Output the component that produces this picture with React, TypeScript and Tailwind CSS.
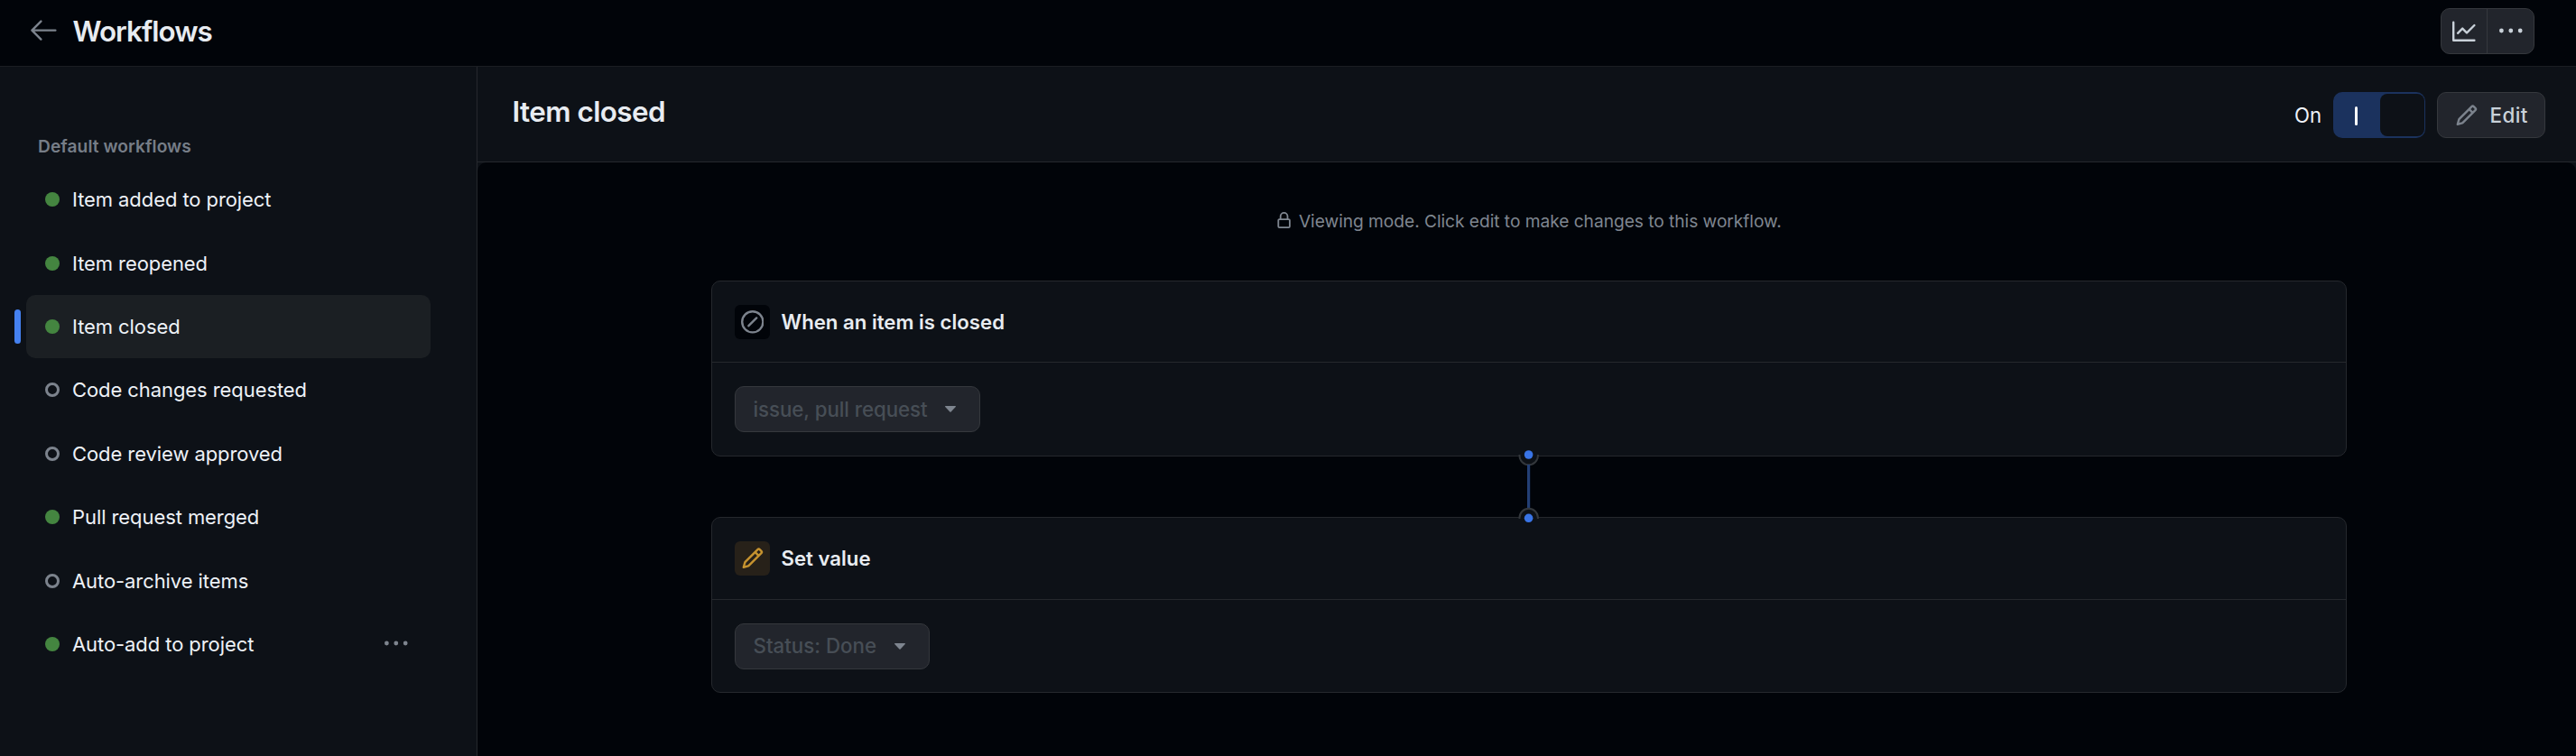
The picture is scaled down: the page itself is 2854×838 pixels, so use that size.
import type { ReactNode } from "react";

const PATHS = {
  arrowLeft:
    "M10.78 19.03a.75.75 0 0 1-1.06 0l-6.25-6.25a.75.75 0 0 1 0-1.06l6.25-6.25a.749.749 0 0 1 1.275.326.749.749 0 0 1-.215.734L5.81 11.5h14.44a.75.75 0 0 1 0 1.5H5.81l4.97 4.97a.75.75 0 0 1 0 1.06Z",
  graph:
    "M1.5 1.75V13.5h13.75a.75.75 0 0 1 0 1.5H.75a.75.75 0 0 1-.75-.75V1.75a.75.75 0 0 1 1.5 0Zm14.28 2.53-5.25 5.25a.75.75 0 0 1-1.06 0L7 7.06 4.28 9.78a.751.751 0 0 1-1.042-.018.751.751 0 0 1-.018-1.042l3.25-3.25a.75.75 0 0 1 1.06 0L10 7.94l4.72-4.72a.751.751 0 0 1 1.042.018.751.751 0 0 1 .018 1.042Z",
  kebab:
    "M8 9a1.5 1.5 0 1 0 0-3 1.5 1.5 0 0 0 0 3ZM1.5 9a1.5 1.5 0 1 0 0-3 1.5 1.5 0 0 0 0 3Zm13 0a1.5 1.5 0 1 0 0-3 1.5 1.5 0 0 0 0 3Z",
  pencil:
    "M11.013 1.427a1.75 1.75 0 0 1 2.474 0l1.086 1.086a1.75 1.75 0 0 1 0 2.474l-8.61 8.61c-.21.21-.47.364-.756.445l-3.251.93a.75.75 0 0 1-.927-.928l.929-3.25c.081-.286.235-.547.445-.758l8.61-8.61Zm.176 4.823L9.75 4.81l-6.286 6.287a.253.253 0 0 0-.064.108l-.558 1.953 1.953-.558a.253.253 0 0 0 .108-.064Zm1.238-3.763a.25.25 0 0 0-.354 0L10.811 3.75l1.439 1.44 1.263-1.263a.25.25 0 0 0 0-.354Z",
  lock: "M4 4a4 4 0 0 1 8 0v2h.25c.966 0 1.75.784 1.75 1.75v5.5A1.75 1.75 0 0 1 12.25 15h-8.5A1.75 1.75 0 0 1 2 13.25v-5.5C2 6.784 2.784 6 3.75 6H4Zm8.25 3.5h-8.5a.25.25 0 0 0-.25.25v5.5c0 .138.112.25.25.25h8.5a.25.25 0 0 0 .25-.25v-5.5a.25.25 0 0 0-.25-.25ZM10.5 6V4a2.5 2.5 0 1 0-5 0v2Z",
  skip: "M8 0a8 8 0 1 1 0 16A8 8 0 0 1 8 0ZM1.5 8a6.5 6.5 0 1 0 13 0 6.5 6.5 0 0 0-13 0Zm9.78-2.22-5.5 5.5a.749.749 0 0 1-1.275-.326.749.749 0 0 1 .215-.734l5.5-5.5a.751.751 0 0 1 1.042.018.751.751 0 0 1 .018 1.042Z",
};

function Icon({ name, box = 16, className }: { name: keyof typeof PATHS; box?: number; className: string }) {
  return (
    <svg viewBox={`0 0 ${box} ${box}`} fill="currentColor" className={`shrink-0 ${className}`} aria-hidden="true">
      <path d={PATHS[name]} />
    </svg>
  );
}

const WORKFLOWS = [
  { label: "Item added to project", on: true },
  { label: "Item reopened", on: true },
  { label: "Item closed", on: true, active: true },
  { label: "Code changes requested", on: false },
  { label: "Code review approved", on: false },
  { label: "Pull request merged", on: true },
  { label: "Auto-archive items", on: false },
  { label: "Auto-add to project", on: true, menu: true },
];

function Sidebar() {
  return (
    <nav className="w-[529px] shrink-0 border-r border-[#25282d] bg-[#0d1117] pt-[76px] pl-[29px]">
      <h2 className="pl-[13px] text-[19.2px] leading-[24px] font-semibold tracking-[0.06px] text-[#767d87]">
        Default workflows
      </h2>
      <ul className="mt-[12px] w-[448px]">
        {WORKFLOWS.map((w) => (
          <li
            key={w.label}
            className={`relative flex h-[70.4px] items-center rounded-[10px] pr-[25px] pl-[21px] ${w.active ? "bg-[#1b1f23]" : ""}`}
          >
            {w.active && <span className="absolute top-[16px] -left-[13px] h-[38px] w-[7px] rounded-[4px] bg-[#4581f0]" />}
            <span
              className={`size-[16px] shrink-0 rounded-full ${w.on ? "bg-[#448540]" : "border-3 border-[#7c838d]"}`}
            />
            <span className="ml-[14px] flex-1 text-[22px] leading-[32px] tracking-[-0.08px] text-[#eef2f7]">{w.label}</span>
            {w.menu && <Icon name="kebab" className="size-[25.6px] text-[#7e858f]" />}
          </li>
        ))}
      </ul>
    </nav>
  );
}

function SelectButton({ className, children }: { className: string; children: ReactNode }) {
  return (
    <button
      disabled
      className={`flex h-[51px] items-center justify-between rounded-[10px] border border-[#35383d] bg-[#22252c] pr-[26px] pl-[19.5px] text-[22.3px] font-medium text-[#474e56] ${className}`}
    >
      {children}
      <svg viewBox="0 0 12 7" className="h-[7px] w-[12px] fill-[#7e858f]">
        <path d="M0.6 0h10.8c.5 0 .8.6.4 1L6.6 6.5a.8.8 0 0 1-1.2 0L.2 1C-.2.6.1 0 .6 0Z" />
      </svg>
    </button>
  );
}

type CardProps = {
  icon: ReactNode;
  iconBg: string;
  title: string;
  value: string;
  headHeight: string;
  buttonClass: string;
};

function Card({ icon, iconBg, title, value, headHeight, buttonClass }: CardProps) {
  return (
    <section className="flex h-[195px] flex-col rounded-[10px] border border-[#25282d] bg-[#0d1117]">
      <header className={`flex items-start border-b border-[#25282d] pt-[26px] pl-[25px] ${headHeight}`}>
        <span className={`flex h-[38px] w-[39px] items-center justify-center rounded-[6px] ${iconBg}`}>{icon}</span>
        <h3 className="ml-[12.5px] text-[22.2px] leading-[38px] font-semibold text-[#e8ecf1]">{title}</h3>
      </header>
      <div className="flex flex-1 items-center pl-[25px]">
        <SelectButton className={buttonClass}>{value}</SelectButton>
      </div>
    </section>
  );
}

function Connector() {
  return (
    <div className="relative h-[67px]">
      <svg viewBox="0 0 24 84" className="absolute -top-[9px] left-[894px] h-[84px] w-[24px]">
        <rect x="2" y="6" width="20" height="4" fill="#0d1117" />
        <path d="M1.5 7V8a10.2 10.2 0 0 0 20.4 0V7" fill="#0d1117" stroke="#33373c" strokeWidth="2" />
        <rect x="10" y="18" width="3.2" height="49" fill="#233f75" />
        <path d="M1.5 78V77a10.2 10.2 0 0 1 20.4 0V78" fill="#0d1117" stroke="#33373c" strokeWidth="2" />
        <circle cx="11.6" cy="7" r="4.8" fill="#3974e6" />
        <circle cx="11.6" cy="77.3" r="4.8" fill="#3974e6" />
      </svg>
    </div>
  );
}

export default function App() {
  return (
    <div className="flex h-[838px] w-[2854px] flex-col overflow-hidden bg-[#010409] font-['Inter',sans-serif] text-[#e8ecf1]">
      <header className="flex h-[74px] shrink-0 items-start border-b border-[#1b1e23] pr-[46px] pl-[29px]">
        <Icon name="arrowLeft" box={24} className="mt-[14px] size-[38.4px] text-[#7c838d]" />
        <h1 className="mt-[15px] ml-[13px] flex-1 text-[31.4px] leading-[40px] font-semibold tracking-[-0.95px]">
          Workflows
        </h1>
        <div className="mt-[9px] flex h-[51px] w-[104px] rounded-[10px] border border-[#35383d] bg-[#22252c] text-[#c9d1d9]">
          <button className="w-[51px] border-r border-[#35383d] pl-[12px]">
            <Icon name="graph" className="size-[25.6px]" />
          </button>
          <button className="pl-[13px]">
            <Icon name="kebab" className="size-[25.6px]" />
          </button>
        </div>
      </header>

      <div className="flex min-h-0 flex-1">
        <Sidebar />
        <main className="flex min-w-0 flex-1 flex-col bg-[#0d1117]">
          <div className="flex h-[106px] shrink-0 items-start border-b border-[#25282d] pr-[34px] pl-[38.5px]">
            <h2 className="mt-[30px] flex-1 text-[31.4px] leading-[40px] font-semibold tracking-[-0.55px]">Item closed</h2>
            <div className="mt-[28px] flex h-[51px] items-center">
              <span className="text-[22.2px] text-[#eef2f7]">On</span>
              <span className="ml-[13px] flex h-[51px] w-[102px] justify-between rounded-[10px] bg-[#1b325e] p-[2px] pr-[1.5px]">
                <span className="mt-[14px] ml-[22px] h-[21px] w-[2.5px] rounded-full bg-white" />
                <span className="w-[48.5px] rounded-[8px] bg-[#0d1117]" />
              </span>
              <button className="ml-[13px] flex h-[51px] w-[120px] items-center rounded-[10px] border border-[#35383d] bg-[#22252c] pl-[19px] text-[22.4px] font-medium tracking-[0.4px] text-[#c9d1d9]">
                <Icon name="pencil" className="size-[25.6px] text-[#7c838d]" />
                <span className="ml-[13px]">Edit</span>
              </button>
            </div>
          </div>

          <div className="flex-1 rounded-t-[10px] bg-[#010409] pt-[50px]">
            <div className="flex items-center justify-center gap-[6.5px] pl-[4px] text-[19.2px] leading-[30px] tracking-[-0.05px] text-[#7f8690]">
              <Icon name="lock" className="size-[19.2px]" />
              Viewing mode. Click edit to make changes to this workflow.
            </div>
            <div className="mt-[51px] ml-[259px] w-[1812px]">
              <Card
                icon={<Icon name="skip" className="size-[25.6px] text-[#7c838d]" />}
                iconBg="bg-[#010409]"
                title="When an item is closed"
                value="issue, pull request"
                headHeight="h-[90px]"
                buttonClass="w-[272px] tracking-[-0.06px]"
              />
              <Connector />
              <Card
                icon={<Icon name="pencil" className="size-[25.6px] text-[#c6932f]" />}
                iconBg="bg-[#272119]"
                title="Set value"
                value="Status: Done"
                headHeight="h-[91px]"
                buttonClass="w-[216px] tracking-[0px]"
              />
            </div>
          </div>
        </main>
      </div>
    </div>
  );
}
